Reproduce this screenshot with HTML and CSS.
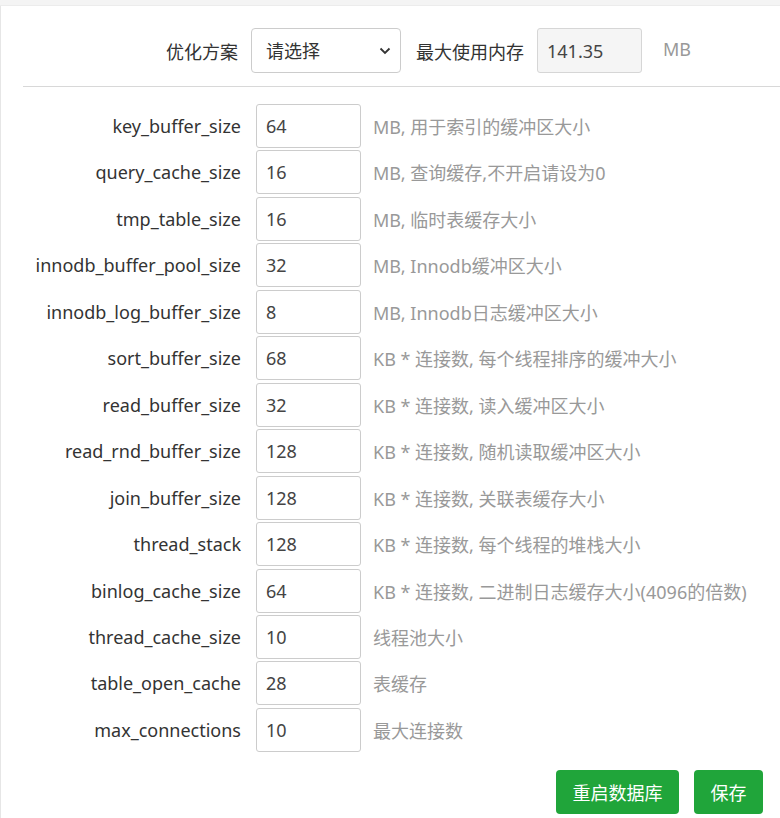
FILE: index.html
```html
<!DOCTYPE html>
<html lang="zh-CN">
<head>
<meta charset="utf-8">
<title>MySQL 性能调整</title>
<link rel="stylesheet" href="styles.css">
</head>
<body>
<div class="topband"></div>
<div class="panel">
  <div class="head-row">
    <span class="head-label">优化方案</span>
    <div class="select-wrap">
      <select class="select">
        <option>请选择</option>
      </select>
      <svg class="chev" width="12" height="8" viewBox="0 0 12 8"><path d="M1.5 1.5 L6 6 L10.5 1.5" fill="none" stroke="#333" stroke-width="1.8"/></svg>
    </div>
    <span class="head-label2">最大使用内存</span>
    <input class="field disabled" value="141.35" disabled>
    <span class="unit">MB</span>
  </div>
  <div class="divider"></div>
  <div class="rows">
    <div class="row"><span class="lbl">key_buffer_size</span><input class="field" value="64"><span class="desc">MB, 用于索引的缓冲区大小</span></div>
    <div class="row"><span class="lbl">query_cache_size</span><input class="field" value="16"><span class="desc">MB, 查询缓存,不开启请设为0</span></div>
    <div class="row"><span class="lbl">tmp_table_size</span><input class="field" value="16"><span class="desc">MB, 临时表缓存大小</span></div>
    <div class="row"><span class="lbl">innodb_buffer_pool_size</span><input class="field" value="32"><span class="desc">MB, Innodb缓冲区大小</span></div>
    <div class="row"><span class="lbl">innodb_log_buffer_size</span><input class="field" value="8"><span class="desc">MB, Innodb日志缓冲区大小</span></div>
    <div class="row"><span class="lbl">sort_buffer_size</span><input class="field" value="68"><span class="desc">KB * 连接数, 每个线程排序的缓冲大小</span></div>
    <div class="row"><span class="lbl">read_buffer_size</span><input class="field" value="32"><span class="desc">KB * 连接数, 读入缓冲区大小</span></div>
    <div class="row"><span class="lbl">read_rnd_buffer_size</span><input class="field" value="128"><span class="desc">KB * 连接数, 随机读取缓冲区大小</span></div>
    <div class="row"><span class="lbl">join_buffer_size</span><input class="field" value="128"><span class="desc">KB * 连接数, 关联表缓存大小</span></div>
    <div class="row"><span class="lbl">thread_stack</span><input class="field" value="128"><span class="desc">KB * 连接数, 每个线程的堆栈大小</span></div>
    <div class="row"><span class="lbl">binlog_cache_size</span><input class="field" value="64"><span class="desc">KB * 连接数, 二进制日志缓存大小(4096的倍数)</span></div>
    <div class="row"><span class="lbl">thread_cache_size</span><input class="field" value="10"><span class="desc">线程池大小</span></div>
    <div class="row"><span class="lbl">table_open_cache</span><input class="field" value="28"><span class="desc">表缓存</span></div>
    <div class="row"><span class="lbl">max_connections</span><input class="field" value="10"><span class="desc">最大连接数</span></div>
  </div>
  <div class="actions">
    <button class="btn btn-restart">重启数据库</button>
    <button class="btn btn-save">保存</button>
  </div>
</div>
</body>
</html>
```

FILE: styles.css
```css
html, body {
  margin: 0;
  padding: 0;
  background: #fff;
}
body {
  font-family: "Noto Sans", "Noto Sans CJK SC", sans-serif;
  font-size: 18px;
  color: #333;
  width: 780px;
  height: 818px;
  overflow: hidden;
}
.topband {
  height: 5px;
  background: #f4f4f4;
  border-bottom: 1px solid #ececec;
}
.panel {
  border-left: 1px solid #e6e6e6;
  height: 812px;
  box-sizing: border-box;
}
.head-row {
  display: flex;
  align-items: center;
  padding-top: 22px;
  height: 45px;
}
.head-label {
  width: 237px;
  text-align: right;
  margin-right: 13px;
  white-space: nowrap;
}
.select-wrap {
  position: relative;
  width: 150px;
  height: 45px;
}
.select {
  appearance: none;
  -webkit-appearance: none;
  width: 150px;
  height: 45px;
  box-sizing: border-box;
  border: 1px solid #ccc;
  border-radius: 4px;
  background: #fff;
  font: inherit;
  color: #333;
  padding: 0 0 0 14px;
  outline: none;
}
.chev {
  position: absolute;
  right: 10px;
  top: 19px;
  pointer-events: none;
}
.head-label2 {
  margin-left: 15px;
  margin-right: 13px;
  white-space: nowrap;
}
.field {
  width: 105px;
  height: 44px;
  box-sizing: border-box;
  border: 1px solid #ccc;
  border-radius: 3px;
  background: #fff;
  font: inherit;
  color: #444;
  padding: 0 0 0 9px;
  margin: 0;
  outline: none;
}
.field.disabled {
  background: #f5f5f5;
  height: 45px;
  border-color: #d6d6d6;
  color: #444;
  -webkit-text-fill-color: #444;
  opacity: 1;
}
.unit {
  margin-left: 21px;
  color: #999;
  margin-top: -4px;
}
.divider {
  margin: 13px 0 0 22px;
  height: 1px;
  background: #d8d8d8;
}
.rows {
  display: flex;
  flex-direction: column;
  gap: 2.46px;
  margin-top: 17px;
}
.row {
  display: flex;
  align-items: center;
  height: 44px;
}
.lbl {
  width: 240px;
  text-align: right;
  margin-right: 15px;
  white-space: nowrap;
}
.desc {
  margin-left: 12px;
  color: #999;
  white-space: nowrap;
}
.actions {
  display: flex;
  justify-content: flex-end;
  gap: 15px;
  margin-top: 18px;
  padding-right: 17px;
}
.btn {
  height: 44px;
  border: none;
  border-radius: 4px;
  background: #20a53a;
  color: #fff;
  font: inherit;
  padding: 0;
  cursor: pointer;
}
.btn-restart { width: 123px; }
.btn-save { width: 69px; }
```
